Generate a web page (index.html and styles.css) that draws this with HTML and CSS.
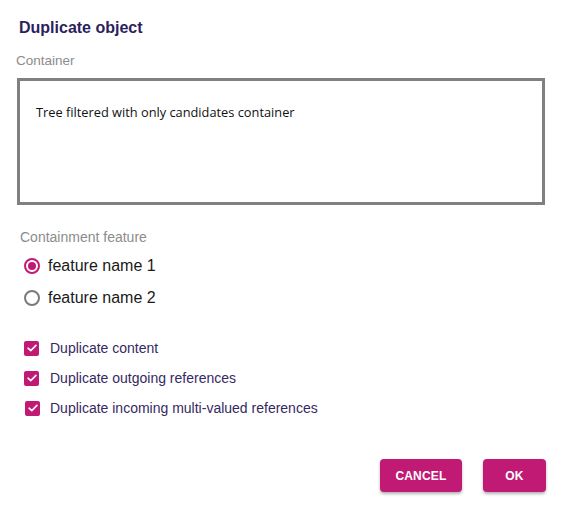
FILE: index.html
```html
<!DOCTYPE html>
<html>
<head>
<meta charset="utf-8">
<link rel="stylesheet" href="styles.css">
</head>
<body>
<div class="dialog">
  <h2 class="title">Duplicate object</h2>
  <div class="field-label">Container</div>
  <div class="tree-box">
    <div class="tree-text">Tree filtered with only candidates container</div>
  </div>
  <div class="group-label">Containment feature</div>
  <div class="radios">
    <label class="radio-row">
      <span class="radio checked"><span class="dot"></span></span>
      <span class="radio-text">feature name 1</span>
    </label>
    <label class="radio-row">
      <span class="radio"></span>
      <span class="radio-text">feature name 2</span>
    </label>
  </div>
  <div class="checks">
    <label class="check-row">
      <span class="check"><svg viewBox="0 0 16 16" width="16" height="16"><path d="M3.5 8.2 L6.6 11 L12.5 5" fill="none" stroke="#fff" stroke-width="1.8" stroke-linecap="round" stroke-linejoin="round"/></svg></span>
      <span class="check-text">Duplicate content</span>
    </label>
    <label class="check-row">
      <span class="check"><svg viewBox="0 0 16 16" width="16" height="16"><path d="M3.5 8.2 L6.6 11 L12.5 5" fill="none" stroke="#fff" stroke-width="1.8" stroke-linecap="round" stroke-linejoin="round"/></svg></span>
      <span class="check-text">Duplicate outgoing references</span>
    </label>
    <label class="check-row shifted">
      <span class="check"><svg viewBox="0 0 16 16" width="16" height="16"><path d="M3.5 8.2 L6.6 11 L12.5 5" fill="none" stroke="#fff" stroke-width="1.8" stroke-linecap="round" stroke-linejoin="round"/></svg></span>
      <span class="check-text">Duplicate incoming multi-valued references</span>
    </label>
  </div>
  <div class="actions">
    <button class="btn cancel">CANCEL</button>
    <button class="btn ok">OK</button>
  </div>
</div>
</body>
</html>
```

FILE: styles.css
```css
html, body {
  margin: 0;
  padding: 0;
  background: #fff;
}
body {
  font-family: "Liberation Sans", Arial, sans-serif;
  width: 572px;
  height: 511px;
  overflow: hidden;
}
.dialog {
  padding: 18px 0 0 16px;
}
.title {
  margin: 0 0 0 3px;
  font-size: 16px;
  line-height: 20px;
  font-weight: bold;
  color: #2b1f5e;
}
.field-label {
  margin-top: 15px;
  font-size: 13.5px;
  line-height: 16px;
  color: #8c8c8c;
}
.tree-box {
  margin: 9px 0 0 1px;
  width: 522px;
  height: 121px;
  border: 3px solid #808080;
  box-sizing: content-box;
  padding: 0;
}
.tree-text {
  font-family: "Open Sans", sans-serif;
  font-size: 12.8px;
  line-height: 16px;
  color: #111;
  padding: 23px 0 0 16px;
}
.group-label {
  margin: 24px 0 0 4px;
  font-size: 14px;
  line-height: 16px;
  color: #8c8c8c;
}
.radios {
  margin: 11px 0 0 8px;
  display: flex;
  flex-direction: column;
  gap: 12px;
}
.radio-row {
  display: flex;
  align-items: center;
  height: 20px;
}
.radio {
  width: 16px;
  height: 16px;
  box-sizing: border-box;
  border: 2px solid #7a7a7a;
  border-radius: 50%;
  display: flex;
  align-items: center;
  justify-content: center;
}
.radio.checked {
  border-color: #c01a75;
}
.dot {
  width: 8px;
  height: 8px;
  border-radius: 50%;
  background: #c01a75;
}
.radio-text {
  margin-left: 8px;
  font-size: 16px;
  color: #1a1a1a;
}
.checks {
  margin: 31px 0 0 8px;
  display: flex;
  flex-direction: column;
  gap: 12px;
}
.check-row {
  display: flex;
  align-items: center;
  height: 18px;
}
.check-row.shifted {
  margin-left: 1px;
}
.check {
  width: 15px;
  height: 15px;
  border-radius: 2px;
  background: #c01a75;
  display: flex;
  align-items: center;
  justify-content: center;
}
.check svg {
  width: 14px;
  height: 14px;
}
.check-text {
  margin-left: 11px;
  font-size: 14px;
  color: #35295f;
}
.shifted .check-text {
  margin-left: 10px;
}
.actions {
  margin-top: 42px;
  width: 530px;
  display: flex;
  justify-content: flex-end;
  gap: 21px;
}
.btn {
  height: 33px;
  border: none;
  border-radius: 4px;
  background: #c01a75;
  color: #fff;
  font-family: "Liberation Sans", Arial, sans-serif;
  font-weight: bold;
  font-size: 12px;
  letter-spacing: 0.2px;
  box-shadow: 0 2px 3px rgba(0, 0, 0, 0.3);
  padding: 0;
}
.cancel {
  width: 82px;
}
.ok {
  width: 63px;
}
```
